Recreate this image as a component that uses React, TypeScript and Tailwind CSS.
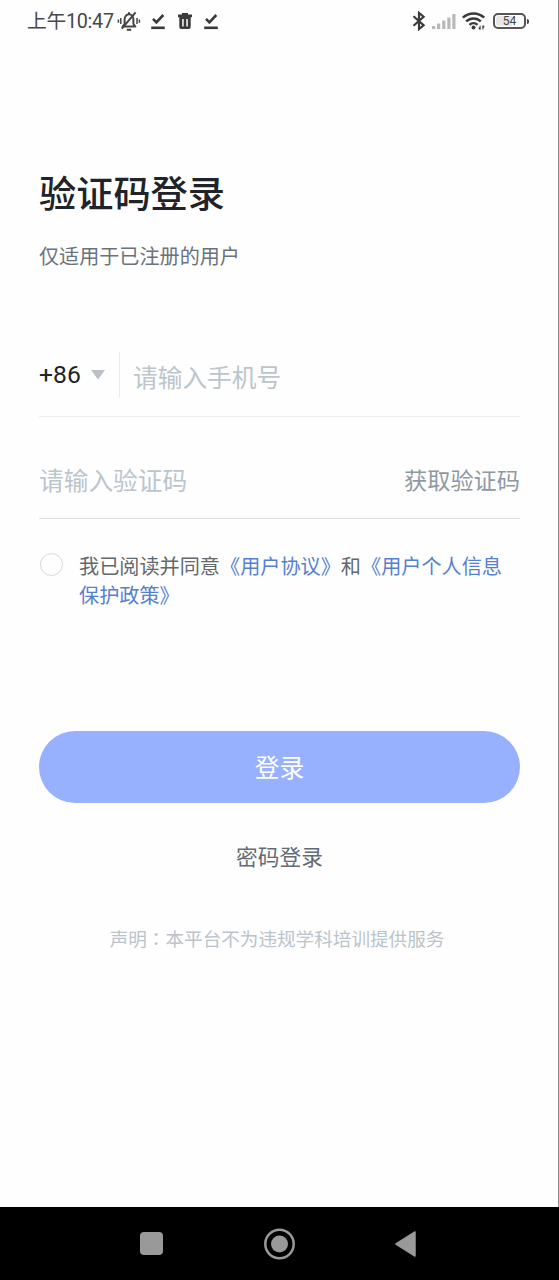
import React, { useState } from 'react';

function MutedBellIcon() {
  return (
    <svg width="24" height="22" viewBox="0 0 24 22" fill="none" stroke="#444" strokeWidth="2">
      <path d="M5.600 16.600h12.800l-2-2.600V9.500c0-3-1.800-5.200-4.400-5.200S7.600 6.500 7.600 9.500v4.500z" strokeLinejoin="round" />
      <path d="M12 2.200v2" />
      <path d="M9.800 19.800h4.400" strokeWidth="2" />
      <path d="M18.600 2.400 4.800 18.600" />
      <path d="M3.800 8v6M1.400 9.500v3.200M20 8v6M22.400 9.500v3.200" strokeWidth="1.500" />
    </svg>
  );
}

function DoneIcon() {
  return (
    <svg width="14" height="17" viewBox="0 0 14 17" fill="none" stroke="#3a3a3a">
      <path d="M2 5.800 5.400 9.300 12.300 2" strokeWidth="2.600" />
      <path d="M0.200 14.800h13.600" strokeWidth="2.600" />
    </svg>
  );
}

function TrashIcon() {
  return (
    <svg width="14" height="16" viewBox="0 0 14 16" fill="#3a3a3a">
      <path fillRule="evenodd" d="M0 1.600h4V0h6v1.600h4V4.300H0zM1.300 4.300h11.400V14a2 2 0 0 1-2 2H3.300a2 2 0 0 1-2-2zM4.200 6v7.500h1.500V6zM8.300 6v7.500h1.500V6z" />
    </svg>
  );
}

function BluetoothIcon() {
  return (
    <svg width="14" height="20" viewBox="0 0 14 20" fill="none" stroke="#3a3a3a" strokeWidth="2.200">
      <path d="M1.500 5.200 11.600 14.300 7 18.100V1.900L11.600 5.700 1.500 14.800" strokeLinejoin="miter" />
    </svg>
  );
}

function SignalIcon() {
  return (
    <svg width="24" height="15" viewBox="0 0 24 15" fill="#b8b8b8">
      <rect x="0" y="12" width="3.200" height="3" />
      <rect x="5" y="9.500" width="3.200" height="5.500" />
      <rect x="10.200" y="6.500" width="3.200" height="8.500" />
      <rect x="15.300" y="3.500" width="3.200" height="11.500" />
      <rect x="20.300" y="0" width="3.200" height="15" />
    </svg>
  );
}

function WifiIcon() {
  return (
    <svg width="24" height="18" viewBox="0 0 24 18" fill="none" stroke="#3a3a3a" strokeWidth="2.500">
      <path d="M0.800 5.700a15.500 15.500 0 0 1 21.400 0" />
      <path d="M4.200 9.400a10.400 10.400 0 0 1 14.600 0" />
      <path d="M7.500 12.800a5.800 5.800 0 0 1 8 0" />
      <circle cx="11.500" cy="15.600" r="2" fill="#3a3a3a" stroke="none" />
      <path d="M18.100 13.600v4M20.900 13.600v4" strokeWidth="1" />
      <path d="m16.200 16 1.900 2v-3zM22.800 15l-1.900-2v3z" fill="#3a3a3a" stroke="none" />
    </svg>
  );
}

function Battery({ level }: { level: number }) {
  return (
    <div className="flex items-center">
      <div className="relative flex h-4 w-[33px] items-center justify-center overflow-hidden rounded-[5px] border-2 border-[#555]">
        <div className="absolute inset-y-px left-px rounded-l-[3px] bg-[#e6e6e6]" style={{ width: `${level}%` }} />
        <span className="relative text-[12px] leading-none text-[#444]">{level}</span>
      </div>
      <div className="ml-px h-[5px] w-0.5 rounded-r-sm bg-[#444]" />
    </div>
  );
}

function StatusBar() {
  return (
    <header className="flex h-[42px] shrink-0 items-center pr-[29px] pl-[27px]">
      <span className="w-[90px] pt-[2px] text-[19.800px] leading-[42px] tracking-[-0.300px] whitespace-nowrap text-[#484848]">上午10:47</span>
      <MutedBellIcon />
      <div className="ml-[10px] flex items-center gap-[12.500px]">
        <DoneIcon />
        <TrashIcon />
        <DoneIcon />
      </div>
      <div className="ml-auto flex items-center">
        <BluetoothIcon />
        <div className="ml-[6px]">
          <SignalIcon />
        </div>
        <div className="mr-[7px] ml-[6px]">
          <WifiIcon />
        </div>
        <Battery level={54} />
      </div>
    </header>
  );
}

function NavigationBar() {
  return (
    <nav className="flex h-[73px] shrink-0 items-center bg-black pl-[140px]">
      <div className="size-[23px] rounded-[4px] bg-[#999]" />
      <svg className="ml-[100px]" width="32" height="32" viewBox="0 0 32 32">
        <circle cx="16.500" cy="16" r="14.200" fill="none" stroke="#999" strokeWidth="2.500" />
        <circle cx="16.500" cy="16" r="8.500" fill="#999" />
      </svg>
      <svg className="ml-[100px]" width="21" height="26" viewBox="0 0 21 26">
        <path d="M20 1v24L1 13z" fill="#999" stroke="#999" strokeWidth="1.500" strokeLinejoin="round" />
      </svg>
    </nav>
  );
}

export default function App() {
  const [phone, setPhone] = useState('');
  const [code, setCode] = useState('');
  const [agreed, setAgreed] = useState(false);

  return (
    <div className="flex h-[1280px] w-full flex-col bg-[#fefefe] font-[Roboto,'Noto_Sans_CJK_SC',sans-serif]">
      <div className="flex flex-1 flex-col border-r border-[#8a8a8a]">
        <StatusBar />
        <main className="flex flex-col pr-[38px] pl-[39px]">
          <h1 className="mt-[129px] text-[37.200px] leading-[48px] font-medium text-[#202329]">验证码登录</h1>
          <p className="mt-[24px] text-[20.100px] leading-[28px] text-[#6a737c]">仅适用于已注册的用户</p>

          <div className="mt-[81px] flex h-[65px] items-start border-b border-[#ededed]">
            <button className="flex h-[46px] w-[81px] items-center border-r border-[#e9ebed] text-[24.700px] text-[#202329]">
              +86
              <svg className="ml-[10px] shrink-0" width="14" height="10" viewBox="0 0 14 10">
                <path d="M0 0h14L7 9.500z" fill="#b9c1c6" />
              </svg>
            </button>
            <input
              type="tel"
              value={phone}
              onChange={(event) => setPhone(event.target.value)}
              placeholder="请输入手机号"
              className="ml-[13px] h-[52px] min-w-0 flex-1 text-[24.700px] outline-none placeholder:text-[#bac5cc]"
            />
          </div>

          <div className="flex h-[102px] items-center border-b border-[#dfdfdf] pt-[27px]">
            <input
              value={code}
              onChange={(event) => setCode(event.target.value)}
              placeholder="请输入验证码"
              className="h-[54px] min-w-0 flex-1 text-[24.700px] outline-none placeholder:text-[#bac5cc]"
            />
            <button className="text-[23.200px] text-[#8e9aa3]">获取验证码</button>
          </div>

          <div className="mt-[34px] flex items-start">
            <button
              role="checkbox"
              aria-checked={agreed}
              onClick={() => setAgreed(!agreed)}
              className={`ml-px size-[23px] shrink-0 rounded-full border-[1.500px] ${agreed
                ? 'border-[#4a7bd8] bg-[#4a7bd8]'
                : 'border-[#d5d9db]'
                }`}
            />
            <p className="ml-[16px] text-[20.150px] leading-[29px] text-[#62686d]">
              我已阅读并同意<span className="text-[#5580d2]">《用户协议》</span>和<span className="text-[#5580d2]">《用户个人信息<br />保护政策》</span>
            </p>
          </div>

          <button className="mt-[120px] h-[72px] rounded-full bg-[#97b1fe] pt-[3px] text-[24.800px] text-white">登录</button>
          <button className="mt-[39px] self-center text-[21.700px] leading-[32px] text-[#626c76]">密码登录</button>
          <p className="mt-[50px] -ml-[5px] text-center text-[18.600px] leading-[28px] text-[#bac4ca]">
            声明<span className="font-['Noto_Sans_CJK_TC']">：</span>本平台不为违规学科培训提供服务
          </p>
        </main>
      </div>
      <NavigationBar />
    </div>
  );
}
